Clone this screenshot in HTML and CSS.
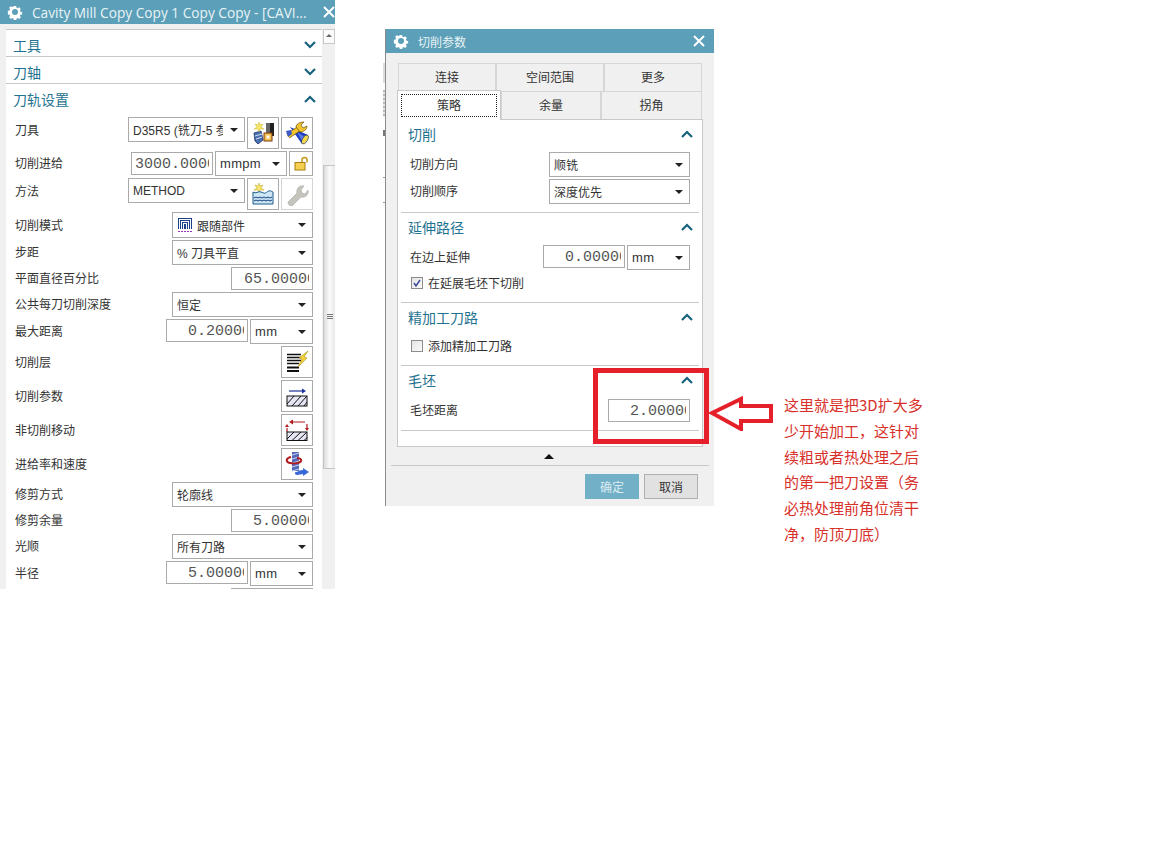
FILE: index.html
```html
<!DOCTYPE html>
<html lang="zh-CN">
<head>
  <meta charset="UTF-8" />
  <title>切削参数</title>
  <link rel="stylesheet" href="styles.css">
</head>
<body>

<!-- 左侧操作窗口 -->
<div class="window main-win">
  <div class="titlebar">
    <svg class="gear" viewBox="0 0 16 16"><path d="M6.6 1h2.8l.4 2 1.3.6 1.8-1.1 2 2-1.100 1.800.6 1.300 2 .4v2.800l-2 .4-.6 1.300 1.100 1.800-2 2-1.800-1.100-1.300.6-.4 2H6.600l-.4-2-1.300-.6-1.800 1.100-2-2 1.100-1.800-.6-1.300-2-.4V6.600l2-.4.6-1.300-1.100-1.800 2-2 1.800 1.100 1.300-.6z" transform="translate(1.200 1.200) scale(.85)" fill="#fff"/><circle cx="8" cy="8" r="3" fill="#5b9fb8"/></svg>
    <span class="title-text">Cavity Mill Copy Copy 1 Copy Copy - [CAVI...</span>
    <svg class="close" viewBox="0 0 12 12"><path d="M1 1l10 10M11 1L1 11"/></svg>
  </div>
  <div class="main-body">
    <div class="form">
      <div class="head closed"><span>工具</span><svg class="chev" viewBox="0 0 12 8"><path d="M1 1l5 5 5-5"/></svg></div>
      <div class="head closed"><span>刀轴</span><svg class="chev" viewBox="0 0 12 8"><path d="M1 1l5 5 5-5"/></svg></div>
      <div class="head open"><span>刀轨设置</span><svg class="chev" viewBox="0 0 12 8"><path d="M1 7l5-5 5 5"/></svg></div>

      <div class="row top">
        <label>刀具</label>
        <div class="sel w117"><span class="clip short">D35R5 (铣刀-5 参数)</span><i></i></div>
        <button class="tool">
          <svg viewBox="0 0 24 24"><path d="M3 12l7-2 2 9-5 4-3-3z" fill="#4a6fb0" stroke="#1c2f66" stroke-width=".8"/><path d="M4 15l7-2M5 18l6-2" stroke="#cfe0f5"/><path d="M8 1l1 3 3-1-2 3 3 2-4 0-1 3-1-3-4 0 3-2-2-3 3 1z" fill="#f7e66a" stroke="#c9b52a" stroke-width=".5"/><rect x="15" y="2" width="8" height="13" fill="#666"/><rect x="19" y="2" width="4" height="13" fill="#222"/><rect x="13" y="12" width="8" height="8" fill="#f3c04e" stroke="#7a3b10"/><rect x="15.500" y="14.500" width="3" height="3" fill="#fff"/></svg>
        </button>
        <button class="tool">
          <svg viewBox="0 0 24 24"><path d="M5 6l18 8-6 9z" fill="#1f3fc0"/><path d="M12 11l8 5-3 4z" fill="#5a7ae8"/><ellipse cx="20" cy="18.500" rx="2.500" ry="5" transform="rotate(30 20 18.500)" fill="#f2d84a" stroke="#1c2f66" stroke-width=".6"/><path d="M3 15L15 7" stroke="#6a4e10" stroke-width="5.500"/><path d="M3 15L15 7" stroke="#f2c52e" stroke-width="4"/><path d="M11 6c0-3 4-5 8-5l-3 3 2 3 4-2c0 4-4 6-7 6z" fill="#f2c52e" stroke="#6a4e10" stroke-width=".7"/><path d="M1 10l5-1 1 4-4 3z" fill="#3a58c8"/></svg>
        </button>
      </div>

      <div class="row">
        <label>切削进给</label>
        <div class="num w82"><div class="num-in"><span>3000.0000</span></div></div>
        <div class="sel w72 mono-unit"><span class="clip">mmpm</span><i></i></div>
        <button class="tool lock">
          <svg viewBox="0 0 16 16"><path d="M9 7V4.500a2.500 2.500 0 0 1 5 0V7" fill="none" stroke="#c89a18" stroke-width="1.500"/><rect x="2" y="7" width="10" height="7.500" fill="#f5cf4e" stroke="#a87c10"/></svg>
        </button>
      </div>

      <div class="row top">
        <label>方法</label>
        <div class="sel w117"><span class="clip">METHOD</span><i></i></div>
        <button class="tool">
          <svg viewBox="0 0 24 24"><path d="M8 1l1 3 3-1-2 3 3 2-4 0-1 3-1-3-4 0 3-2-2-3 3 1z" fill="#f7e66a" stroke="#b8a52a" stroke-width=".5"/><path d="M2 10c3 2 5-1 8 0s4 2 6 0 4-1 6 0v12H2z" fill="#cfe6f5" stroke="#1c5a8a"/><path d="M3 16l2-1 2 1 2-1 2 1 2-1 2 1 2-1 2 1 2-1M3 19l2-1 2 1 2-1 2 1 2-1 2 1 2-1 2 1 2-1" fill="none" stroke="#123f7a"/></svg>
        </button>
        <button class="tool off">
          <svg viewBox="0 0 24 24"><path d="M3 20l9-9c-1-4 2-8 7-7l-3 4 1 3 3 1 3-4c1 5-3 8-7 7l-9 9c-2 1-4-2-4-4z" fill="#c4c4bc" stroke="#aaa" stroke-width=".6"/></svg>
        </button>
      </div>

      <div class="row">
        <label>切削模式</label>
        <div class="sel w141 h26">
          <svg class="mode-ico" viewBox="0 0 16 16" shape-rendering="crispEdges"><path d="M1.500 12V1.500h13V12M3.500 12V3.500h9V12M5.500 12V5.500h5V12M7.500 12V7.500h1V12" fill="none" stroke="#1c3f8a"/><path d="M1 14.500h14" stroke="#a030c0" stroke-dasharray="2 1"/></svg>
          <span class="clip">跟随部件</span><i></i>
        </div>
      </div>
      <div class="row">
        <label>步距</label>
        <div class="sel w141"><span class="clip">% 刀具平直</span><i></i></div>
      </div>
      <div class="row">
        <label>平面直径百分比</label>
        <div class="num w82"><div class="num-in"><span>65.00000</span></div></div>
      </div>
      <div class="row">
        <label>公共每刀切削深度</label>
        <div class="sel w141"><span class="clip">恒定</span><i></i></div>
      </div>
      <div class="row top">
        <label class="lh23">最大距离</label>
        <div class="num w82"><div class="num-in"><span>0.20000</span></div></div>
        <div class="sel w63 mono-unit"><span class="clip">mm</span><i></i></div>
      </div>
      <div class="row">
        <label>切削层</label>
        <button class="tool">
          <svg viewBox="0 0 24 24"><path d="M2 4.500h14M2 7.500h14M2 10.500h14M2 13.500h12" stroke="#111" stroke-width="1.300"/><path d="M2 17.500h12M2 21h12" stroke="#111" stroke-width="2"/><path d="M23 1l-9 7 3 1-4 8 9-9-3-1 4-6z" fill="#f5d23a" stroke="#a8901a" stroke-width=".6"/></svg>
        </button>
      </div>
      <div class="row">
        <label>切削参数</label>
        <button class="tool">
          <svg viewBox="0 0 24 24"><path d="M4 7h15" stroke="#1c2f9a" stroke-width="1.200"/><path d="M17 4.500l4 2.500-4 2.500z" fill="#1c2f9a"/><rect x="2" y="12" width="20" height="10" fill="#e6e6f5" stroke="#111"/><path d="M2 20l7-8M7 22l9-10M13 22l9-10M19 22l3-4" stroke="#111"/></svg>
        </button>
      </div>
      <div class="row">
        <label>非切削移动</label>
        <button class="tool">
          <svg viewBox="0 0 24 24"><path d="M7 4h13M2 10v4M22 6v4" stroke="#b01c1c" stroke-width="1.200"/><path d="M8 1.500L4 4l4 2.500zM0 9l2-3 2 3zM20 10l2 3 2-3z" fill="#b01c1c"/><rect x="2" y="14" width="20" height="8.500" fill="#e6e6f5" stroke="#111"/><path d="M2 21l7-7M7 22.500l9-8.500M13 22.500l9-8.500M19 22.500l3-3" stroke="#111"/></svg>
        </button>
      </div>
      <div class="row">
        <label>进给率和速度</label>
        <button class="tool">
          <svg viewBox="0 0 24 24"><rect x="7" y="0" width="7" height="19" fill="#5468b8"/><path d="M7 3l7-2M7 7l7-2M7 11l7-2M7 15l7-2M7 19l7-2" stroke="#c8d4f0"/><path d="M6 5C1 6 0 10 5 11c4 1 10 0 11-2s-2-3-4-3" fill="none" stroke="#b01c1c" stroke-width="2"/><path d="M10 20c2 1 4-2 8-2v-2l6 4-6 4v-2c-3 0-6 2-8 0z" fill="#3a68d8"/></svg>
        </button>
      </div>
      <div class="row">
        <label>修剪方式</label>
        <div class="sel w141"><span class="clip">轮廓线</span><i></i></div>
      </div>
      <div class="row">
        <label>修剪余量</label>
        <div class="num w82"><div class="num-in"><span>5.00000</span></div></div>
      </div>
      <div class="row">
        <label>光顺</label>
        <div class="sel w141"><span class="clip">所有刀路</span><i></i></div>
      </div>
      <div class="row top">
        <label class="lh23">半径</label>
        <div class="num w82"><div class="num-in"><span>5.00000</span></div></div>
        <div class="sel w63 mono-unit"><span class="clip">mm</span><i></i></div>
      </div>
      <div class="row">
        <div class="num w82"></div>
      </div>
    </div>

    <div class="scrollbar">
      <div class="scroll-btn"></div>
      <div class="scroll-thumb"><span></span></div>
    </div>
  </div>
</div>

<!-- 对话框左边露出的后面窗口 -->
<div class="stub s1"></div>
<div class="stub s2"></div>
<div class="stub s3"></div>
<div class="stub s4"></div>
<div class="stub s5"></div>

<!-- 切削参数对话框 -->
<div class="window dialog">
  <div class="titlebar">
    <svg class="gear" viewBox="0 0 16 16"><path d="M6.6 1h2.8l.4 2 1.3.6 1.8-1.1 2 2-1.100 1.800.6 1.300 2 .4v2.800l-2 .4-.6 1.300 1.100 1.800-2 2-1.800-1.100-1.300.6-.4 2H6.600l-.4-2-1.300-.6-1.800 1.100-2-2 1.100-1.800-.6-1.300-2-.4V6.600l2-.4.6-1.300-1.100-1.800 2-2 1.800 1.100 1.300-.6z" transform="translate(1.200 1.200) scale(.85)" fill="#fff"/><circle cx="8" cy="8" r="3" fill="#5b9fb8"/></svg>
    <span class="title-text cn">切削参数</span>
    <svg class="close" viewBox="0 0 12 12"><path d="M1 1l10 10M11 1L1 11"/></svg>
  </div>
  <div class="dialog-body">
    <div class="tabs">
      <div class="tab-row">
        <div class="tab t98">连接</div>
        <div class="tab t108">空间范围</div>
        <div class="tab t98">更多</div>
      </div>
      <div class="tab-row second">
        <div class="tab active"><span>策略</span></div>
        <div class="tab t100">余量</div>
        <div class="tab t101">拐角</div>
      </div>
    </div>
    <div class="tab-panel">
      <div class="sect s-cut">
        <div class="sect-head"><span>切削</span><svg class="chev" viewBox="0 0 12 8"><path d="M1 7l5-5 5 5"/></svg></div>
        <div class="row"><label>切削方向</label><div class="sel w141"><span class="clip">顺铣</span><i></i></div></div>
        <div class="row"><label>切削顺序</label><div class="sel w141"><span class="clip">深度优先</span><i></i></div></div>
      </div>
      <div class="sect s-ext">
        <div class="sect-head"><span>延伸路径</span><svg class="chev" viewBox="0 0 12 8"><path d="M1 7l5-5 5 5"/></svg></div>
        <div class="row top"><label class="lh23">在边上延伸</label><div class="num w82"><div class="num-in"><span>0.00000</span></div></div><div class="sel w63 mono-unit"><span class="clip">mm</span><i></i></div></div>
        <div class="check-row"><span class="check on"><svg viewBox="0 0 10 10"><path d="M2 5l2 3 4-6"/></svg></span>在延展毛坯下切削</div>
      </div>
      <div class="sect s-fin">
        <div class="sect-head"><span>精加工刀路</span><svg class="chev" viewBox="0 0 12 8"><path d="M1 7l5-5 5 5"/></svg></div>
        <div class="check-row lower"><span class="check"></span>添加精加工刀路</div>
      </div>
      <div class="sect s-blank">
        <div class="sect-head"><span>毛坯</span><svg class="chev" viewBox="0 0 12 8"><path d="M1 7l5-5 5 5"/></svg></div>
        <div class="row"><label>毛坯距离</label><div class="num w82"><div class="num-in"><span>2.00000</span></div></div></div>
      </div>
    </div>
    <div class="collapse"><i></i></div>
    <div class="actions">
      <button class="btn ok">确定</button>
      <button class="btn">取消</button>
    </div>
  </div>
</div>

<!-- 标注 -->
<div class="mark-box"></div>
<svg class="mark-arrow" viewBox="0 0 66 36"><path d="M4 18L33 4v7h30v15H33v8z"/></svg>
<p class="note">这里就是把3D扩大多<br>少开始加工，这针对<br>续粗或者热处理之后<br>的第一把刀设置（务<br>必热处理前角位清干<br>净，防顶刀底）</p>

</body>
</html>
```
FILE: styles.css
```css
body {
  margin: 0;
  background: #fff;
  font-family: "Liberation Sans", "Noto Sans CJK SC", sans-serif;
  font-size: 12px;
  color: #333;
  height: 864px;
  position: relative;
  overflow: hidden;
}
.window {
  position: absolute;
  background: #f0f0f0;
  overflow: hidden;
}
.main-win {
  left: 0;
  top: 0;
  width: 335px;
  height: 589px;
}
.dialog {
  left: 385px;
  top: 29px;
  width: 329px;
  height: 477px;
  border-left: 1px solid #8c8c8c;
  box-sizing: border-box;
}
.titlebar {
  height: 24px;
  background: #5b9fb8;
  display: flex;
  align-items: center;
  color: #eaf3f6;
}
.gear {
  width: 16px;
  height: 16px;
  margin: 0 9px 0 7px;
  flex: none;
}
.title-text {
  font-family: "Open Sans", "Noto Sans CJK SC", sans-serif;
  font-size: 13.7px;
  white-space: nowrap;
  flex: 1;
}
.title-text.cn {
  font-family: "Noto Sans CJK SC", sans-serif;
  font-size: 12px;
}
.close {
  width: 12px;
  height: 12px;
  margin-right: 0;
  flex: none;
  fill: none;
  stroke: #fff;
  stroke-width: 2;
}
.dialog .close { margin-right: 9px; }

.main-body {
  display: flex;
  padding: 5px 0 0 6px;
  height: 560px;
}
.form {
  width: 316px;
  background: #fff;
  border-top: 1px solid #c8c8c8;
  padding-top: 3px;
  height: 600px;
  flex: none;
}
.head {
  height: 23px;
  display: flex;
  align-items: center;
  justify-content: space-between;
  padding: 0 6px 0 7px;
  font-size: 14px;
  color: #1f7390;
  border-bottom: 1px solid #c8c8c8;
  margin-bottom: 3px;
  font-family: "Noto Sans CJK SC", sans-serif;
}
.head.open {
  border-bottom: 0;
  height: 24px;
  margin-bottom: 6px;
}
.chev {
  width: 12px;
  height: 8px;
  flex: none;
  fill: none;
  stroke: #17637e;
  stroke-width: 2.2;
}

.row {
  display: flex;
  align-items: center;
  justify-content: flex-end;
  gap: 2px;
  margin: 0 9px 2px 9px;
  font-family: "Noto Sans CJK SC", sans-serif;
}
.row.top { align-items: flex-start; }
.row label {
  margin-right: auto;
  white-space: nowrap;
  padding-bottom: 2px;
}
.row.top label { line-height: 25px; }
.row.top label.lh23 { line-height: 23px; }

.sel {
  height: 25px;
  box-sizing: border-box;
  border: 1px solid #aaa;
  background: #fff;
  display: flex;
  align-items: center;
  padding: 0 5px 0 4px;
  flex: none;
  font-family: "Liberation Sans", "Noto Sans CJK SC", sans-serif;
}
.sel .clip {
  flex: 1;
  overflow: hidden;
  white-space: nowrap;
  padding-right: 5px;
}
.sel .clip.short { margin-right: 7px; padding-right: 0; }
.sel i {
  width: 0;
  height: 0;
  border: 4px solid transparent;
  border-top: 4px solid #222;
  border-bottom: 0;
  flex: none;
  margin: 0 1px 0 0;
}
.mono-unit { font-size: 13px; letter-spacing: .3px; }
.h26 { height: 26px; }
.w117 { width: 117px; }
.w141 { width: 141px; }
.w82 { width: 82px; }
.w72 { width: 72px; }
.w63 { width: 63px; }
.mode-ico { width: 16px; height: 16px; margin-right: 4px; flex: none; }

.num {
  height: 23px;
  box-sizing: border-box;
  border: 1px solid #aaa;
  background: #fff;
  padding-right: 3px;
  flex: none;
}
.num-in {
  height: 21px;
  overflow: hidden;
  text-align: right;
  white-space: nowrap;
  font-family: "Liberation Mono", monospace;
  font-size: 15px;
  line-height: 24px;
  color: #555;
}
.num-in span {
  display: inline-block;
  margin-right: -7px;
}

.tool {
  width: 32px;
  height: 32px;
  box-sizing: border-box;
  border: 1px solid #aaa;
  background: #fff;
  padding: 3px;
  flex: none;
  display: flex;
}
.tool svg { width: 24px; height: 24px; }
.tool.off { border-color: #d4d4d4; }
.tool.lock { width: 24px; height: 25px; padding: 3px; }
.tool.lock svg { width: 16px; height: 17px; }

.scrollbar {
  width: 12px;
  margin-left: 1px;
  flex: none;
  background: #f0f0f0;
}
.scroll-btn {
  height: 15px;
  background: #fbfbfb;
  border: 1px solid #c8c8c8;
  box-sizing: border-box;
  position: relative;
}
.scroll-btn::after {
  content: "";
  position: absolute;
  left: 2px;
  top: 4px;
  border: 3px solid transparent;
  border-bottom: 3px solid #666;
  border-top: 0;
}
.scroll-thumb {
  margin-top: 121px;
  height: 304px;
  box-sizing: border-box;
  background: linear-gradient(90deg, #dcdcdc, #fafafa 50%, #e8e8e8);
  border: 1px solid #c4c4c4;
  border-right: 0;
  display: flex;
  align-items: center;
  justify-content: center;
}
.scroll-thumb span {
  width: 6px;
  height: 6px;
  background: repeating-linear-gradient(#777 0 1px, transparent 1px 2px);
}

.dialog-body {
  height: 453px;
  position: relative;
}
.tabs { padding: 10px 0 0 12px; }
.tab-row { display: flex; }
.tab {
  height: 28px;
  box-sizing: border-box;
  border: 1px solid #d6d6d6;
  border-bottom: 0;
  padding-bottom: 2px;
  font-family: "Noto Sans CJK SC", sans-serif;
  display: flex;
  align-items: center;
  justify-content: center;
  color: #333;
  background: #f0f0f0;
}
.t98 { width: 98px; }
.t108 { width: 108px; }
.t100 { width: 100px; }
.t101 { width: 101px; }
.tab.active {
  width: 104px;
  height: 30px;
  margin: -1px 0 -1px -1px;
  background: #fff;
  border: 1px solid #c8c8c8;
  border-bottom: 0;
  padding: 3px;
  position: relative;
  z-index: 1;
}
.tab.active span {
  border: 1px dotted #222;
  flex: 1;
  align-self: stretch;
  display: flex;
  align-items: center;
  justify-content: center;
  padding-bottom: 2px;
}
.tab-panel {
  margin-left: 11px;
  width: 306px;
  height: 328px;
  box-sizing: border-box;
  background: #fff;
  border: 1px solid #c8c8c8;
  padding: 0 3px;
}
.sect {
  border-bottom: 1px solid #c8c8c8;
  box-sizing: border-box;
}
.s-cut { height: 93px; }
.s-ext { height: 90px; }
.s-fin { height: 63px; }
.s-blank { height: 65px; }
.sect-head {
  height: 28px;
  margin-bottom: 4px;
  display: flex;
  align-items: center;
  justify-content: space-between;
  padding: 0 6px 0 7px;
  font-family: "Noto Sans CJK SC", sans-serif;
  font-size: 14px;
  color: #1f7390;
}
.s-blank .sect-head { margin-bottom: 5px; }
.sect .row { margin: 0 9px 2px 9px; }
.sect .row label { padding-bottom: 2px; }
.check-row {
  display: flex;
  align-items: center;
  gap: 5px;
  margin: 4px 0 0 10px;
  font-family: "Noto Sans CJK SC", sans-serif;
}
.check-row.lower { margin-top: 6px; }
.check {
  width: 12px;
  height: 12px;
  box-sizing: border-box;
  border: 1px solid #8c8c8c;
  background: linear-gradient(135deg, #e4e4e4, #fafafa);
  display: flex;
}
.check svg {
  width: 10px;
  height: 10px;
  fill: none;
  stroke: #3c4a9a;
  stroke-width: 1.500;
}
.collapse {
  height: 18px;
  margin: 0 5px;
  border-bottom: 1px solid #c8c8c8;
  display: flex;
  align-items: center;
  justify-content: center;
}
.collapse i {
  border: 5px solid transparent;
  border-bottom: 5px solid #111;
  border-top: 0;
  margin-right: 2px;
}
.actions {
  display: flex;
  justify-content: flex-end;
  gap: 5px;
  padding: 8px 16px 0 0;
}
.btn {
  width: 54px;
  height: 25px;
  box-sizing: border-box;
  border: 1px solid #b0b0b0;
  background: #e1e1e1;
  font-family: "Noto Sans CJK SC", sans-serif;
  font-size: 12px;
  color: #333;
  padding: 0;
}
.btn.ok {
  background: #72b0c8;
  border-color: #72b0c8;
  color: #dcebf1;
}

.stub {
  position: absolute;
  left: 383px;
  width: 2px;
  background: #dcdcdc;
}
.s1 { top: 63px; height: 20px; }
.s2 { top: 90px; height: 27px; background: repeating-linear-gradient(#bbb 0 2px, #e6e6e6 2px 4px); }
.s3 { top: 130px; height: 6px; background: #777; }
.s4 { top: 177px; height: 1px; background: #999; }
.s5 { top: 202px; height: 1px; background: #999; }

.mark-box {
  position: absolute;
  left: 593px;
  top: 368px;
  width: 116px;
  height: 76px;
  box-sizing: border-box;
  border: 5px solid #e5202a;
}
.mark-arrow {
  position: absolute;
  left: 708px;
  top: 395px;
  width: 66px;
  height: 36px;
  fill: #fff;
  stroke: #e5202a;
  stroke-width: 4;
}
.note {
  position: absolute;
  left: 784px;
  top: 392px;
  margin: 0;
  font-family: "Noto Sans CJK SC", sans-serif;
  font-size: 15px;
  line-height: 25.8px;
  color: #d8302a;
  white-space: nowrap;
}
```
